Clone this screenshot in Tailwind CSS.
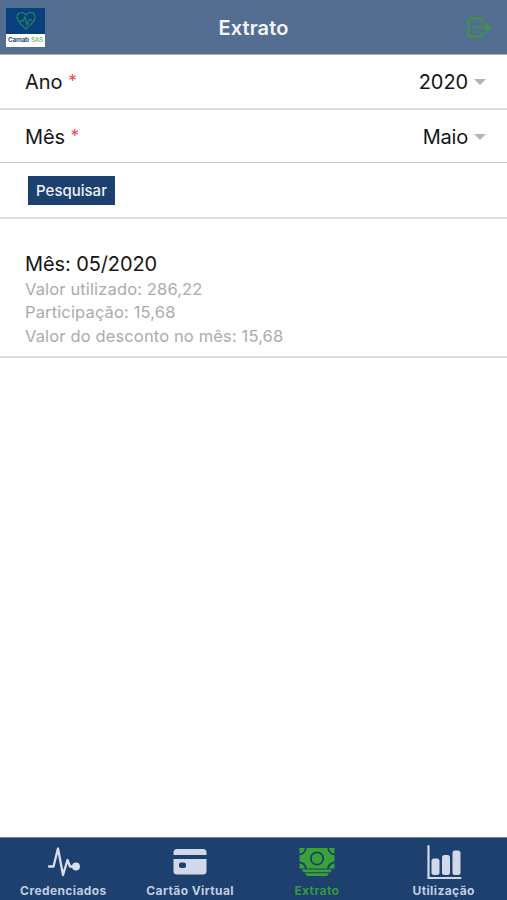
<!DOCTYPE html>
<html lang="pt-BR">
<head>
    <meta charset="UTF-8">
    <meta name="viewport" content="width=device-width, initial-scale=1.0">
    <title>Extrato</title>
    <script src="https://cdn.jsdelivr.net/npm/@tailwindcss/browser@4"></script>
</head>
<body class="bg-white font-['Inter',sans-serif] text-[#151515]">

    <div class="flex h-[900px] w-[507px] flex-col overflow-hidden">

        <!-- Cabeçalho -->
        <header class="grid h-[55px] shrink-0 grid-cols-[1fr_auto_1fr] items-center border-b border-[#a3afc0] bg-[#546e91] px-1.5 pt-px">
            <div class="flex h-[39px] w-[39px] flex-col bg-[#07407c]">
                <div class="flex h-[26px] items-center justify-center">
                    <svg class="h-5 w-5" viewBox="0 0 20 20" fill="none" stroke="#1e7c62" stroke-width="1.5" stroke-linejoin="round">
                        <path d="M10 18C7 15 1 11 1 6C1 1 7 0 10 4C13 0 19 1 19 6C19 11 13 15 10 18Z"/>
                        <path d="M4 10h3l2-4l2 8l2-5h3"/>
                    </svg>
                </div>
                <div class="flex h-[13px] items-center justify-center gap-[2px] bg-white text-[6.500px] font-bold leading-none text-[#31557f]">
                    <span class="tracking-[-0.3px]">Camab</span><span class="font-medium tracking-[-0.3px] text-[#68b85b]">SAS</span>
                </div>
            </div>
            <h1 class="pt-px text-[20px] font-semibold leading-none tracking-[0.1px] text-[#f3f6fb]">Extrato</h1>
            <button class="mr-[10px] justify-self-end pt-px">
                <svg class="h-[22px] w-6" viewBox="0 0 24 22" fill="none" stroke="#3a9a3c" stroke-width="1.800" stroke-linejoin="round">
                    <path d="M15.500 6V3L13.500 1.500H3L1.500 3V18L3 19.500H13.500L15.500 18V15"/>
                    <path d="M6 10.500H20"/>
                    <path d="M18 5.500L24 10.500L18 15.500Z" fill="#3a9a3c" stroke="none"/>
                </svg>
            </button>
        </header>

        <main class="flex-1">
            <!-- Filtros -->
            <div class="flex h-[55px] items-center justify-between border-b-2 border-[#dcdcdc] pl-[25px] pr-[21px] text-[20px]">
                <label>Ano <span class="align-[2px] text-[17px] leading-none text-[#f0445c]">*</span></label>
                <div class="flex items-center gap-1.5">
                    <span class="tracking-[-0.1px]">2020</span>
                    <svg class="h-1.5 w-3" viewBox="0 0 12 6" fill="#b5b5b5"><path d="M0 0h12L6 6z"/></svg>
                </div>
            </div>
            <div class="flex h-[53px] items-center justify-between border-b border-[#cbcbcb] pl-[25px] pr-[21px] pt-px text-[20px]">
                <label class="tracking-[-0.1px]">Mês <span class="align-[2px] text-[17px] leading-none text-[#f0445c]">*</span></label>
                <div class="flex items-center gap-1.5">
                    <span class="tracking-[-0.2px]">Maio</span>
                    <svg class="h-1.5 w-3" viewBox="0 0 12 6" fill="#b5b5b5"><path d="M0 0h12L6 6z"/></svg>
                </div>
            </div>
            <div class="flex h-[56px] items-center border-b-2 border-[#dcdcdc] pl-7">
                <button class="h-[29px] w-[87px] bg-[#1d416f] pt-0.5 text-[15px] font-medium text-[#eef3fa]">Pesquisar</button>
            </div>

            <!-- Resultado -->
            <section class="h-[139px] border-b-2 border-[#dcdcdc] pl-[25px] pt-[31px]">
                <h2 class="text-[20px] leading-[28px] tracking-[-0.1px]">Mês: 05/2020</h2>
                <div class="text-[16.500px] leading-[23.300px] tracking-[0.140px] text-[#ababab]">
                    <p>Valor utilizado: 286,22</p>
                    <p>Participação: 15,68</p>
                    <p>Valor do desconto no mês: 15,68</p>
                </div>
            </section>
        </main>

        <!-- Menu inferior -->
        <nav class="grid h-[63px] shrink-0 grid-cols-4 border-t border-[#7186a2] bg-[#1d406f] text-[12px] font-bold tracking-[0.4px] text-[#c3cde0]">
            <a class="flex flex-col items-center gap-[3px] pt-1.5">
                <svg class="h-9 w-[34px]" viewBox="0 0 34 36" fill="none" stroke="#d7deed" stroke-width="2.300" stroke-linecap="round" stroke-linejoin="round">
                    <path d="M3 22.500H7.500L12 4.500L17 31L21.500 16L24 22.500H28"/>
                    <circle cx="30" cy="22.500" r="2.800" fill="#d7deed"/>
                </svg>
                <span class="leading-4">Credenciados</span>
            </a>
            <a class="flex flex-col items-center gap-[3px] pt-1.5">
                <svg class="h-9 w-[34px]" viewBox="0 0 34 36" fill="#d1d9e9">
                    <path d="M4 5H30Q33.500 5 33.500 8.500V11H.5V8.500Q.5 5 4 5Z"/>
                    <path fill-rule="evenodd" d="M.5 15H33.500V27Q33.500 30.500 30 30.500H4Q.5 30.500 .5 27ZM8 18.500Q6 18.500 6 20.500V22Q6 24 8 24H11Q13 24 13 22V20.500Q13 18.500 11 18.500Z"/>
                </svg>
                <span class="leading-4">Cartão Virtual</span>
            </a>
            <a class="flex flex-col items-center gap-[3px] pt-1.5 text-[#35983a]">
                <svg class="h-9 w-[36px]" viewBox="0 0 36 36" fill="none">
                    <path d="M.5 4H35.500V24.500H.5Z" fill="#39a239"/>
                    <g stroke="#1d406f" stroke-width="1.800">
                        <circle cx="18" cy="14.500" r="6.200"/>
                        <path d="M0 10.500Q6 10.500 7 3M36 10.500Q30 10.500 29 3M0 18.500Q6 18.500 7 25M36 18.500Q30 18.500 29 25"/>
                    </g>
                    <path d="M3 25.500H33L31.500 28.200H4.500ZM6 29.300H30L28 32H8Z" fill="#39a239"/>
                </svg>
                <span class="leading-4">Extrato</span>
            </a>
            <a class="flex flex-col items-center gap-[3px] pt-1.5">
                <svg class="h-9 w-[36px]" viewBox="0 0 36 36" fill="#d1d9e9">
                    <path d="M2.500 2V34H34.500" fill="none" stroke="#d1d9e9" stroke-width="2.200" stroke-linecap="round"/>
                    <rect x="5.500" y="14.500" width="8" height="16.500" rx="2.500"/>
                    <rect x="16" y="11" width="8" height="20" rx="2.500"/>
                    <rect x="26.500" y="6.500" width="8" height="24.500" rx="2.500"/>
                </svg>
                <span class="leading-4">Utilização</span>
            </a>
        </nav>
    </div>

</body>
</html>
